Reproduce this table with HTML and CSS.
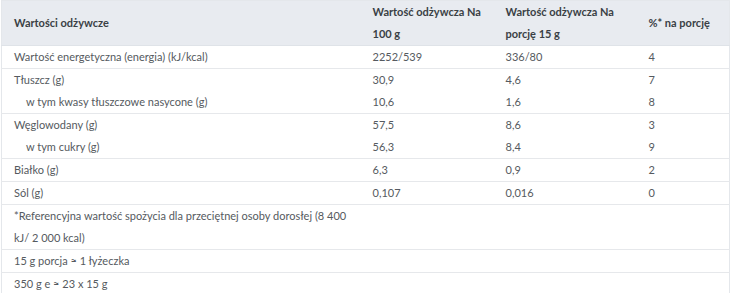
FILE: index.html
```html
<!DOCTYPE html>
<html lang="pl">
<head>
<meta charset="utf-8">
<link rel="stylesheet" href="styles.css">
</head>
<body>
<table class="nutri">
  <colgroup>
    <col class="c1"><col class="c2"><col class="c3"><col class="c4">
  </colgroup>
  <thead>
    <tr>
      <th>Wartości odżywcze</th>
      <th>Wartość odżywcza Na 100 g</th>
      <th>Wartość odżywcza Na porcję 15 g</th>
      <th>%* na porcję</th>
    </tr>
  </thead>
  <tbody>
    <tr><td>Wartość energetyczna (energia) (kJ/kcal)</td><td>2252/539</td><td>336/80</td><td>4</td></tr>
  </tbody>
  <tbody>
    <tr><td>Tłuszcz (g)</td><td>30,9</td><td>4,6</td><td>7</td></tr>
    <tr><td class="sub">w tym kwasy tłuszczowe nasycone (g)</td><td>10,6</td><td>1,6</td><td>8</td></tr>
  </tbody>
  <tbody>
    <tr><td>Węglowodany (g)</td><td>57,5</td><td>8,6</td><td>3</td></tr>
    <tr><td class="sub">w tym cukry (g)</td><td>56,3</td><td>8,4</td><td>9</td></tr>
  </tbody>
  <tbody>
    <tr><td>Białko (g)</td><td>6,3</td><td>0,9</td><td>2</td></tr>
  </tbody>
  <tbody>
    <tr><td>Sól (g)</td><td>0,107</td><td>0,016</td><td>0</td></tr>
  </tbody>
  <tbody>
    <tr><td>*Referencyjna wartość spożycia dla przeciętnej osoby dorosłej (8 400 kJ/ 2 000 kcal)</td><td></td><td></td><td></td></tr>
  </tbody>
  <tbody>
    <tr><td>15 g porcja ≈ 1 łyżeczka</td><td></td><td></td><td></td></tr>
  </tbody>
  <tbody>
    <tr><td>350 g e ≈ 23 x 15 g</td><td></td><td></td><td></td></tr>
  </tbody>
</table>
</body>
</html>
```
FILE: styles.css
```css
html, body {
  margin: 0;
  padding: 0;
  background: #ffffff;
}
body {
  font-family: Lato, "Noto Sans", sans-serif;
  font-size: 11px;
  color: #555a60;
}
.nutri {
  width: 729px;
  margin-left: 1px;
  border-collapse: collapse;
  table-layout: fixed;
  border-left: 1px solid #e4e7eb;
  border-right: 1px solid #e4e7eb;
  border-top: 1px solid #e4e7eb;
}
.c1 { width: 359px; }
.c2 { width: 133px; }
.c3 { width: 143px; }
.c4 { width: auto; }
.nutri th {
  background: #e8ebf0;
  color: #3a3f45;
  font-weight: 700;
  text-align: left;
  line-height: 22px;
  padding: 0 12px;
  vertical-align: middle;
  border-bottom: 1px solid #dfe3e8;
}
.nutri td {
  line-height: 22px;
  padding: 0 12px;
  vertical-align: top;
}
.nutri tbody {
  border-bottom: 1px solid #e6e8eb;
}
.nutri td.sub {
  padding-left: 24px;
}
```
